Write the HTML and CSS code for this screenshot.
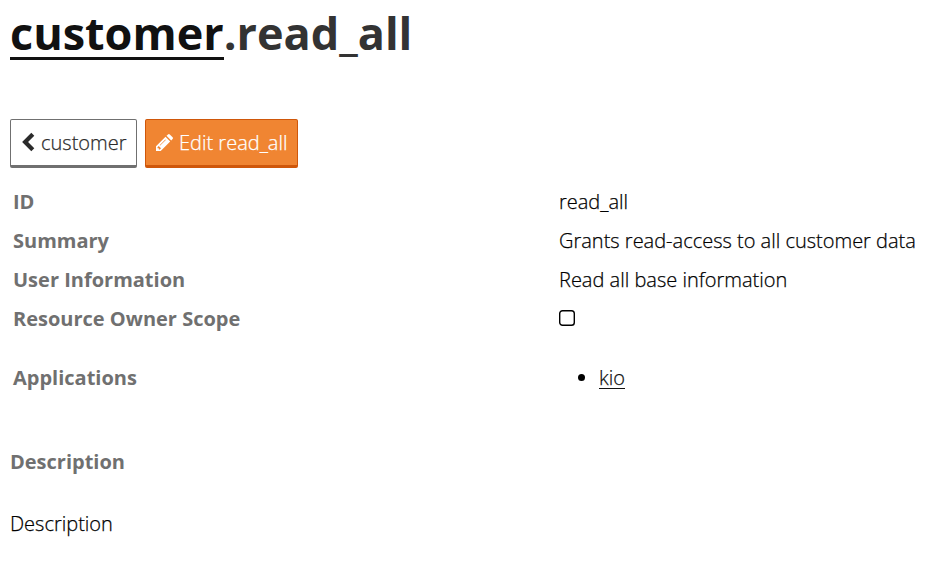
FILE: index.html
```html
<!DOCTYPE html>
<html lang="en">
<head>
<meta charset="utf-8">
<title>customer.read_all</title>
<link rel="stylesheet" href="styles.css">
</head>
<body>
<h1><a href="#">customer</a>.read_all</h1>
<div class="buttons">
<a class="btn" href="#"><svg class="chevron" width="13" height="20" viewBox="0 0 13 20"><path d="M10.800 2.300 3.100 10 10.800 17.700" fill="none" stroke="currentColor" stroke-width="4.200"/></svg><span>customer</span></a>
<a class="btn primary" href="#"><svg class="pencil" width="17" height="17" viewBox="0 0 17 17"><path fill="currentColor" fill-rule="evenodd" d="M0 17V12.300L9.500 2.800 14.200 7.500 4.700 17ZM10.500 1.800 12 .4Q12.900-.4 13.800.4L16.600 3.200Q17.400 4.100 16.600 5L15.200 6.500ZM1.500 13.200V14.200H2.800V15.500H3.800L5 14.300 2.700 12ZM3.700 11.200 4.200 11.600 9.800 6 9.400 5.500Z"/></svg><span>Edit read_all</span></a>
</div>
<table>
<tr><th>ID</th><td>read_all</td></tr>
<tr><th>Summary</th><td>Grants read-access to all customer data</td></tr>
<tr><th>User Information</th><td>Read all base information</td></tr>
<tr><th>Resource Owner Scope</th><td><svg class="check" width="16" height="16" viewBox="0 0 16 16"><rect x=".7" y=".7" width="14.600" height="14.600" rx="2.800" fill="none" stroke="currentColor" stroke-width="1.400"/></svg></td></tr>
<tr class="apps"><th>Applications</th><td><ul><li><a href="#">kio</a></li></ul></td></tr>
</table>
<h2>Description</h2>
<p>Description</p>
</body>
</html>
```

FILE: styles.css
```css
body { margin: 0; padding: 0 10px; background: #fff; color: #000; font: 300 20px/27px "Open Sans", sans-serif; -webkit-text-stroke: .25px; }
a { color: #111; text-decoration: none; }
h1 { margin: 0; padding-top: 1px; height: 117px; box-sizing: border-box; font-size: 45px; line-height: 63px; font-weight: 700; color: #333; -webkit-text-stroke: 0; }
h1 a { display: inline-block; height: 56px; border-bottom: 3px solid #111; }
.buttons { display: flex; gap: 8px; padding-top: 2px; }
.btn { box-sizing: border-box; height: 49px; width: 127px; display: flex; align-items: center; padding: 0 0 0 11px; border: 1px solid #707070; border-bottom-width: 3px; border-radius: 2px; color: #2b2b2b; white-space: nowrap; }
.primary { width: 153px; padding-left: 10px; background: #f08532; border-color: #cf570a; color: #fff; }
.chevron { margin: -1px 6px 0 0; }
.pencil { margin-right: 6px; }
table { width: 907px; margin-top: 14px; border-collapse: collapse; table-layout: fixed; }
th { width: 543px; padding: 0 0 0 3px; text-align: left; font-weight: 700; color: #707070; -webkit-text-stroke: 0; }
td { padding: 0 0 0 3px; white-space: nowrap; }
tr { height: 39px; }
.apps { height: 79px; }
.check { display: block; margin-bottom: 2px; }
ul { margin: 0; padding-left: 40px; }
li a { display: inline-block; height: 24px; line-height: 27px; border-bottom: 1px solid #111; }
h2 { margin: 31px 0 35px; font-size: 20px; line-height: 27px; color: #707070; -webkit-text-stroke: 0; }
p { margin: 0; }
```
